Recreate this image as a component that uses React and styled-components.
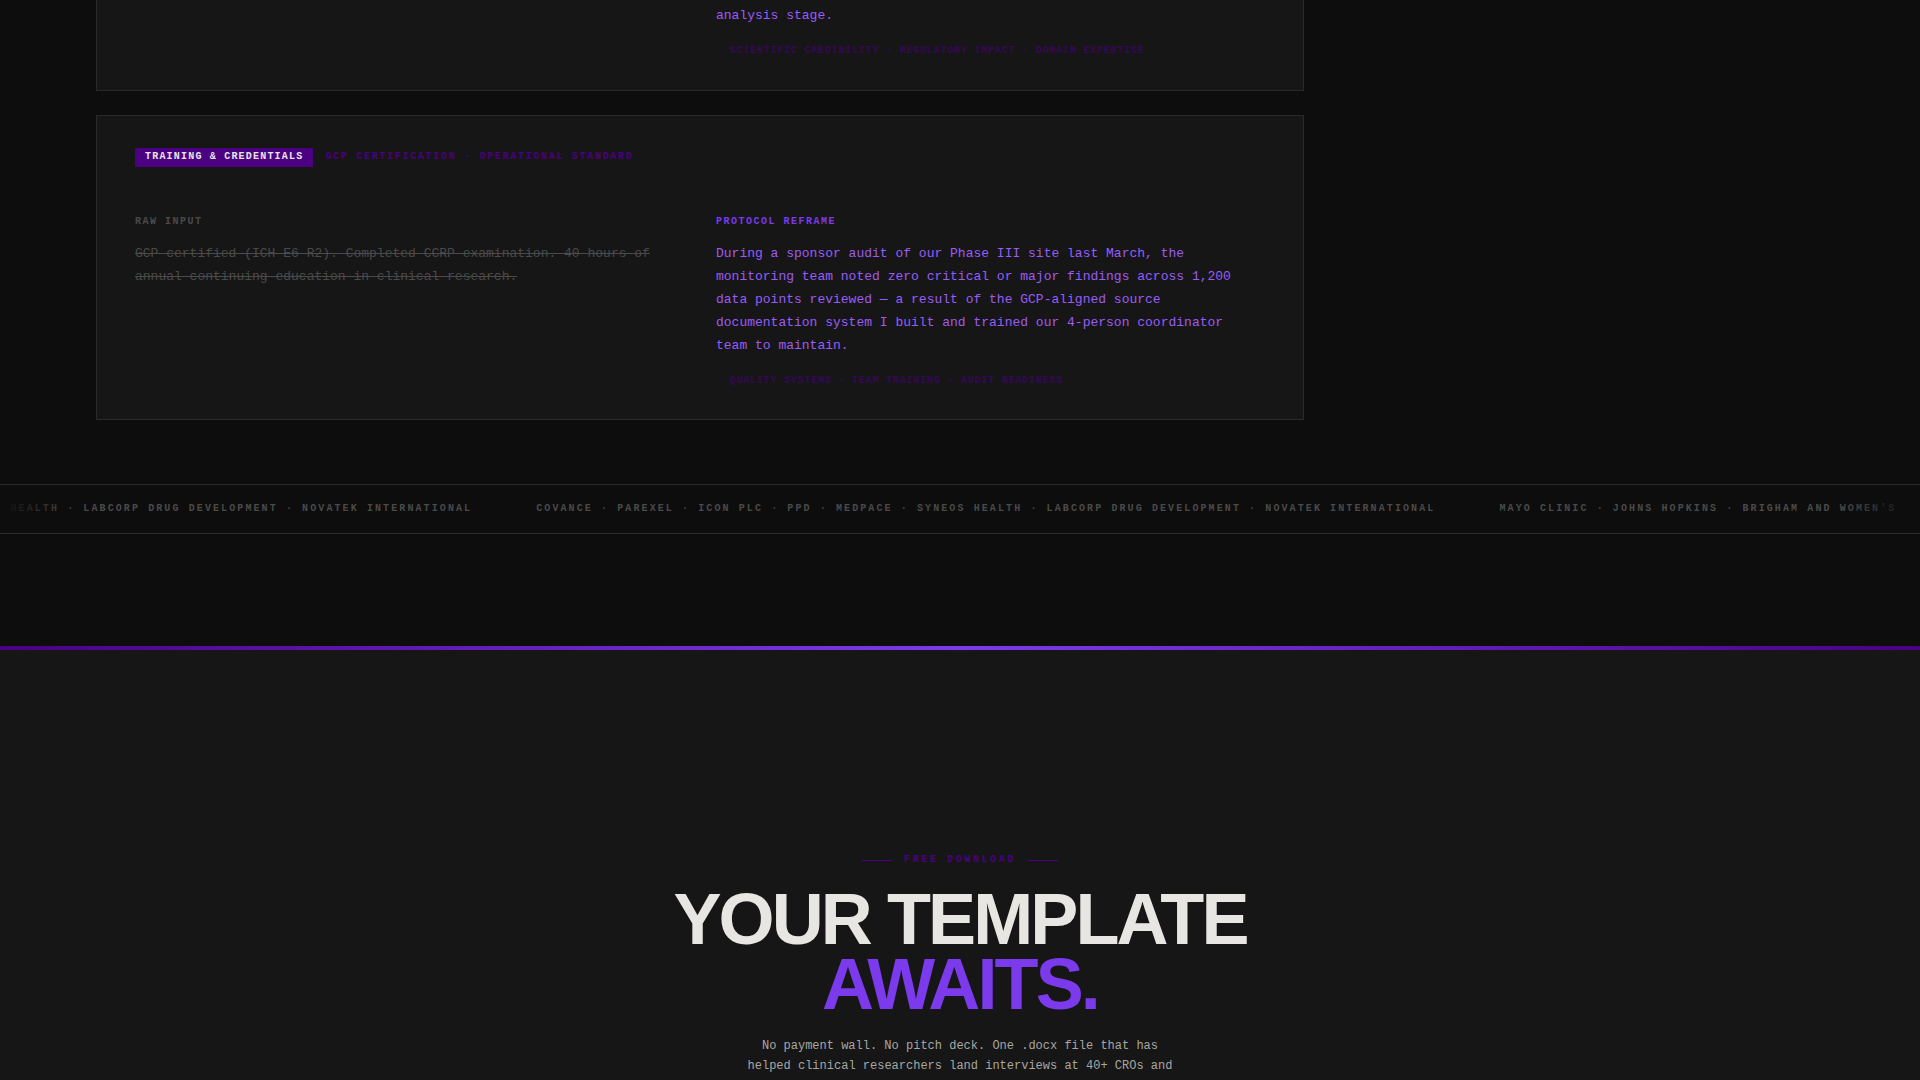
import styled, { createGlobalStyle } from "styled-components";

const GlobalStyle = createGlobalStyle`
  * {
    box-sizing: border-box;
    margin: 0;
    padding: 0;
  }
  body {
    background: #0d0d0d;
    color: #e8e6e3;
    font-family: "Liberation Mono", monospace;
  }
`;

const Page = styled.div`
  min-height: 100vh;
  display: flex;
  flex-direction: column;
`;

const Examples = styled.section`
  width: 100%;
  max-width: 1400px;
  padding: 0 5vw;
  display: flex;
  flex-direction: column;
  gap: 24px;
`;

const Card = styled.article`
  background: #161616;
  border: 1px solid #2a2a2a;
  padding: 32px 38px 31px;
  ${(props) => props.$continued && "border-top: none; padding: 4px 38px 32px;"}
`;

const CardHeader = styled.header`
  display: flex;
  align-items: baseline;
  gap: 12px;
  margin-bottom: 48px;
`;

const Badge = styled.span`
  background: #4b0082;
  color: #e8e6e3;
  padding: 3px 10px 4px;
  font-size: 10px;
  font-weight: 700;
  line-height: 12px;
  letter-spacing: 0.12em;
`;

const Topic = styled.h3`
  color: #4b0082;
  font-size: 10px;
  font-weight: 700;
  line-height: 12px;
  letter-spacing: 0.17em;
`;

const Columns = styled.div`
  display: grid;
  grid-template-columns: 1fr 1fr;
  gap: 32px;
`;

const Label = styled.h4`
  color: ${(props) => (props.$active ? "#7c3aed" : "#4a4a4a")};
  font-size: 10px;
  font-weight: 700;
  line-height: 14px;
  letter-spacing: 0.15em;
  margin-bottom: 13px;
`;

const Copy = styled.p`
  max-width: 540px;
  color: #9b5cf6;
  font-size: 13px;
  line-height: 23px;
`;

const RawCopy = styled(Copy)`
  color: #4a4a4a;
  text-decoration: line-through;
`;

const Tags = styled.p`
  margin-top: 17px;
  color: #4b0082;
  opacity: 0.6;
  font-size: 10px;
  font-weight: 700;
  line-height: 14px;
  letter-spacing: 0.08em;
`;

const Ticker = styled.div`
  position: relative;
  margin: 64px 0 112px;
  padding: 16px 0;
  border-top: 1px solid #2a2a2a;
  border-bottom: 1px solid #2a2a2a;
  overflow: hidden;
  &::before,
  &::after {
    content: "";
    position: absolute;
    z-index: 1;
    top: 0;
    bottom: 0;
    width: 80px;
  }
  &::before {
    left: 0;
    background: linear-gradient(to right, #0d0d0d, transparent);
  }
  &::after {
    right: 0;
    background: linear-gradient(to left, #0d0d0d, transparent);
  }
`;

//the track is already part of the way through its loop
const Track = styled.div`
  display: flex;
  gap: 64px;
  width: max-content;
  transform: translateX(-427px);
`;

const TickerItem = styled.span`
  color: #4a4a4a;
  font-size: 10px;
  font-weight: 700;
  line-height: 16px;
  letter-spacing: 0.21em;
  white-space: nowrap;
`;

const Bar = styled.div`
  height: 4px;
  background: linear-gradient(to right, #4b0082, #7c3aed, #4b0082);
`;

const Download = styled.section`
  flex: 1;
  background: #161616;
  padding: 202px 5vw 0;
  display: flex;
  flex-direction: column;
  align-items: center;
  text-align: center;
`;

const Eyebrow = styled.p`
  display: flex;
  align-items: center;
  gap: 12px;
  margin-bottom: 19px;
  color: #4b0082;
  font-size: 10px;
  font-weight: 700;
  line-height: 16px;
  letter-spacing: 0.26em;
  &::before,
  &::after {
    content: "";
    width: 30px;
    height: 1px;
    background: #4b0082;
  }
`;

const Title = styled.h2`
  font-family: "Liberation Sans", sans-serif;
  font-size: 72px;
  font-weight: 700;
  line-height: 65px;
  letter-spacing: -0.04em;
  margin-bottom: 19px;
`;

const Accent = styled.span`
  display: block;
  color: #7c3aed;
`;

const Lead = styled.p`
  max-width: 440px;
  color: #a8a6a3;
  font-size: 12px;
  line-height: 20px;
`;

const cros =
  "COVANCE · PAREXEL · ICON PLC · PPD · MEDPACE · SYNEOS HEALTH · LABCORP DRUG DEVELOPMENT · NOVATEK INTERNATIONAL";
const tickerItems = [cros, cros, "MAYO CLINIC · JOHNS HOPKINS · BRIGHAM AND WOMEN'S"];

function App() {
  return (
    <>
      <GlobalStyle />
      <Page>
        <Examples>
          <Card $continued>
            <Columns>
              <div />
              <div>
                <Copy>analysis stage.</Copy>
                <Tags>→ SCIENTIFIC CREDIBILITY · REGULATORY IMPACT · DOMAIN EXPERTISE</Tags>
              </div>
            </Columns>
          </Card>
          <Card>
            <CardHeader>
              <Badge>TRAINING &amp; CREDENTIALS</Badge>
              <Topic>GCP CERTIFICATION · OPERATIONAL STANDARD</Topic>
            </CardHeader>
            <Columns>
              <div>
                <Label>RAW INPUT</Label>
                <RawCopy>
                  GCP certified (ICH E6 R2). Completed CCRP examination. 40 hours of
                  annual continuing education in clinical research.
                </RawCopy>
              </div>
              <div>
                <Label $active>PROTOCOL REFRAME</Label>
                <Copy>
                  During a sponsor audit of our Phase III site last March, the
                  monitoring team noted zero critical or major findings across 1,200
                  data points reviewed — a result of the GCP-aligned source
                  documentation system I built and trained our 4-person coordinator
                  team to maintain.
                </Copy>
                <Tags>→ QUALITY SYSTEMS · TEAM TRAINING · AUDIT READINESS</Tags>
              </div>
            </Columns>
          </Card>
        </Examples>
        <Ticker>
          <Track>
            {tickerItems.map((item, index) => (
              <TickerItem key={index}>{item}</TickerItem>
            ))}
          </Track>
        </Ticker>
        <Bar />
        <Download>
          <Eyebrow>FREE DOWNLOAD</Eyebrow>
          <Title>
            YOUR TEMPLATE
            <Accent>AWAITS.</Accent>
          </Title>
          <Lead>
            No payment wall. No pitch deck. One .docx file that has helped
            clinical researchers land interviews at 40+ CROs and
          </Lead>
        </Download>
      </Page>
    </>
  );
}

export default App;
